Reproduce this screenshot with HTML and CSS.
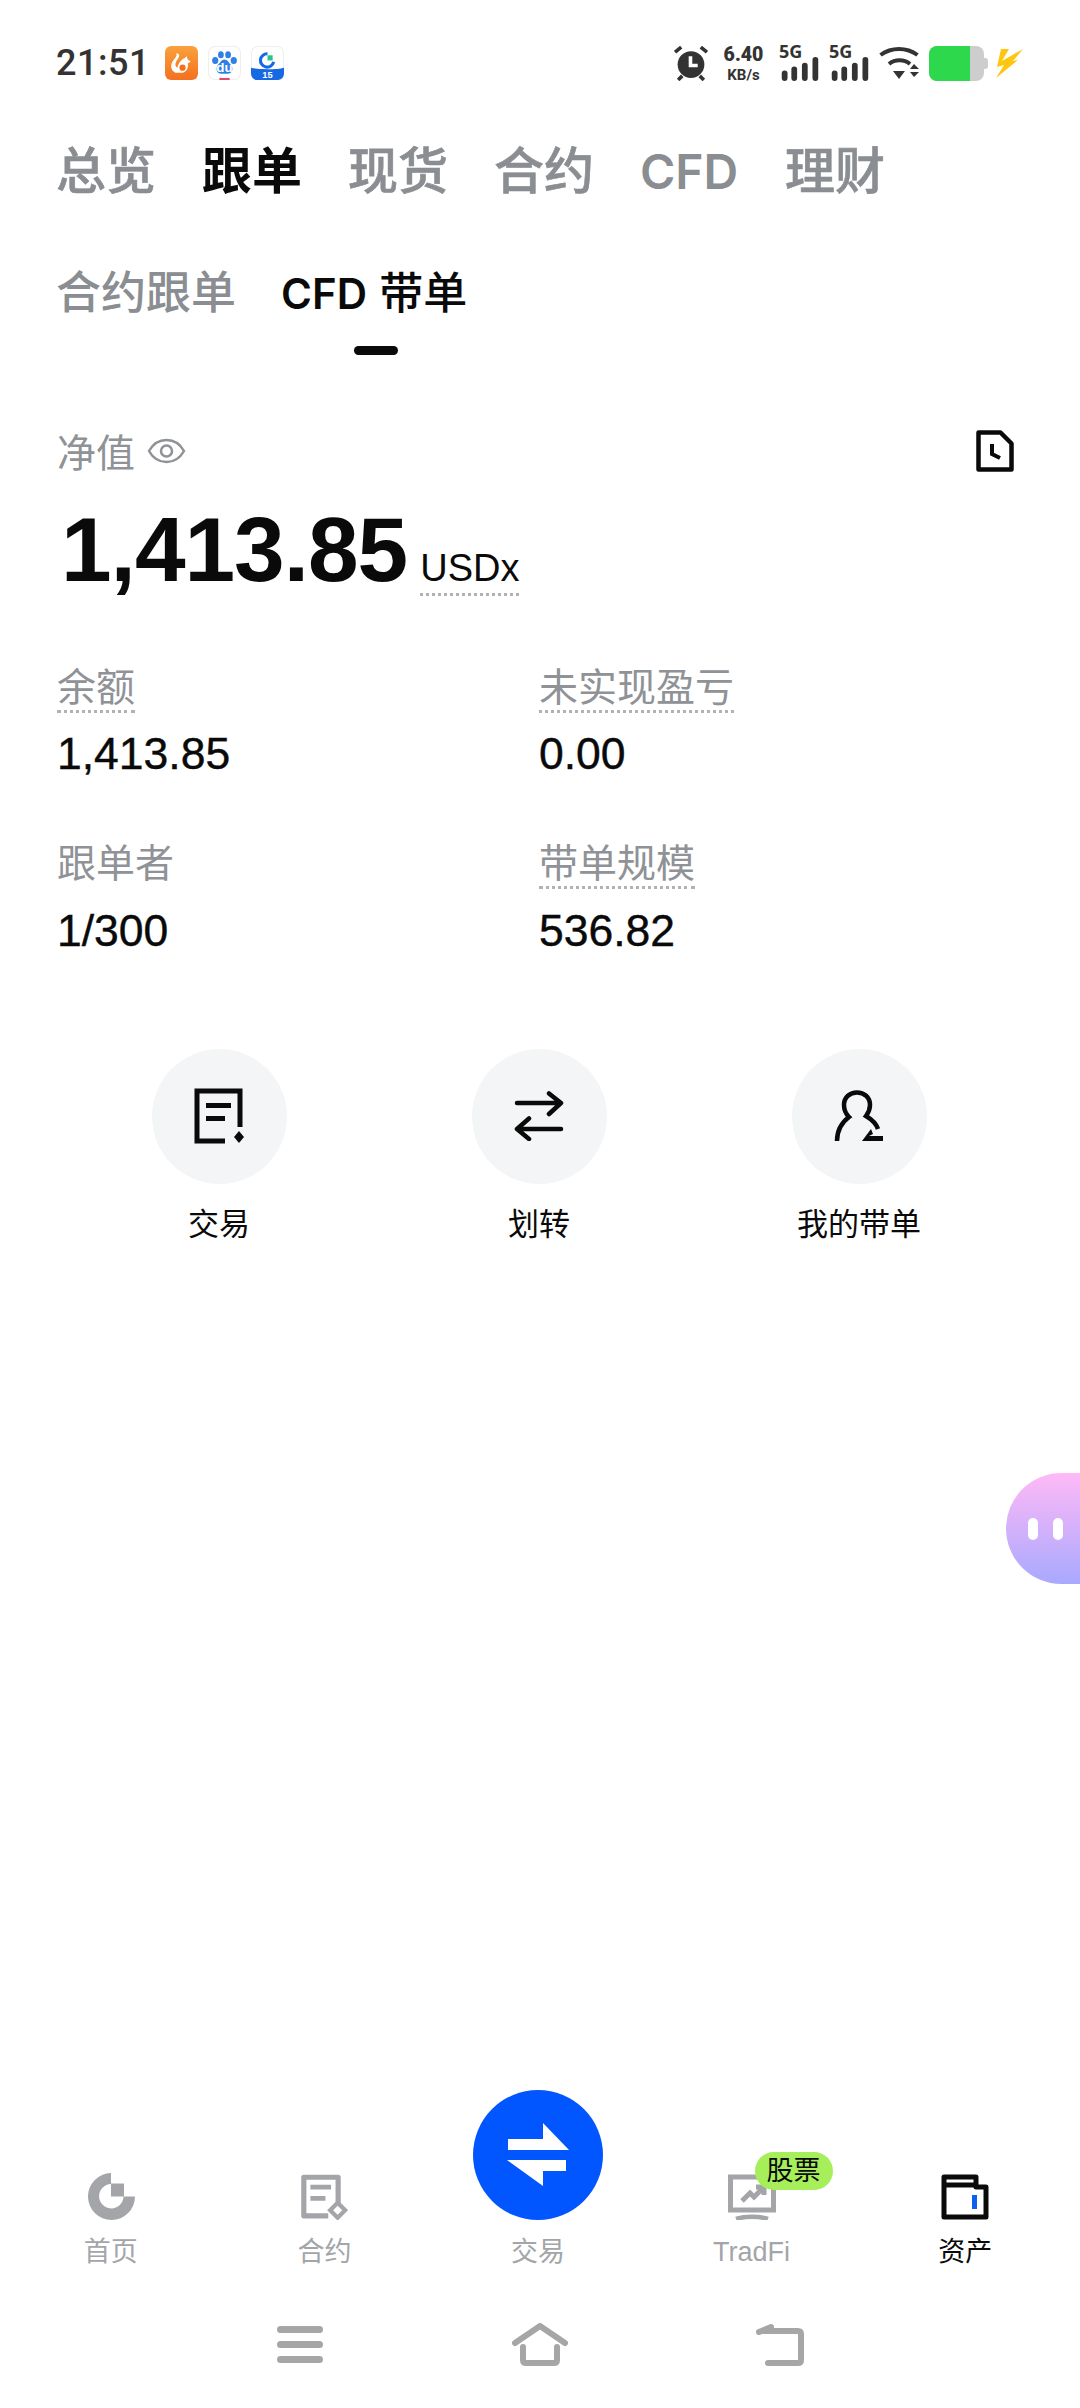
FILE: index.html
```html
<!DOCTYPE html>
<html lang="zh-CN">
	<head>
		<meta charset="utf-8" />
		<title>资产</title>
		<meta name="viewport" content="width=device-width, initial-scale=1.0">
		<link rel="stylesheet" href="styles.css">
	</head>
	<body>
		<div id="main">
			<div class="status">
				<span class="time">21:51</span>
				<div class="notif">
					<svg width="33" height="34" viewBox="0 0 32 33"><defs><linearGradient id="uc" x1="0" y1="0" x2="0" y2="1"><stop offset="0" stop-color="#f9a13c"/><stop offset="1" stop-color="#f4701f"/></linearGradient></defs><rect width="32" height="33" rx="6" fill="url(#uc)"/><path d="M11 7c4 0 3 4 1 6-2 3-3 6 0 8 1-4 4-8 7-9l2-2 1 3 3 2-3 2c1 4-1 8-5 9h-7c-5-3-5-8-2-12 2-3 4-4 3-7z" fill="#fff"/><circle cx="17" cy="21" r="3" fill="#f4701f"/></svg>
					<svg width="33" height="34" viewBox="0 0 32 33"><rect x=".5" y=".5" width="31" height="32" rx="6" fill="#fff" stroke="#eee"/><g fill="#2f7fe6"><ellipse cx="7" cy="14" rx="3" ry="3.400"/><ellipse cx="12.500" cy="8.500" rx="2.800" ry="3.400"/><ellipse cx="19.500" cy="8.500" rx="2.800" ry="3.400"/><ellipse cx="25" cy="14" rx="3" ry="3.400"/><path d="M16 13c3 0 4 3 6 5 3 3 2 9-3 9h-6c-5 0-6-6-3-9 2-2 3-5 6-5z"/></g><text x="16" y="25" class="du">du</text><rect x="11" y="31" width="10" height="2" fill="#e8456b"/></svg>
					<svg width="33" height="34" viewBox="0 0 32 33"><rect x=".5" y=".5" width="31" height="32" rx="6" fill="#fff" stroke="#eee"/><path d="M0 21c6 2 26 2 32 0v6a6 6 0 0 1-6 6H6a6 6 0 0 1-6-6z" fill="#1668e3"/><path d="M22 15.500a6.500 6.500 0 1 1-6-8" fill="none" stroke="#1668e3" stroke-width="3"/><path d="M16 9h5v5h-5z" fill="#22c58b"/><text x="16" y="31" class="uc-num">15</text></svg>
				</div>
				<div class="status-right">
					<svg width="34" height="36" viewBox="0 0 33 35"><circle cx="16.500" cy="19" r="13" fill="#333"/><path d="M16 11v9h7" fill="none" stroke="#fff" stroke-width="3.500"/><path d="M1 7l6-5M32 7l-6-5M4 34l4-4M29 34l-4-4" stroke="#333" stroke-width="3.500"/></svg>
					<div class="speed"><b>6.40</b><span>KB/s</span></div>
					<div class="signal">
						<span class="fiveg">5G</span>
						<svg width="38" height="24" viewBox="0 0 38 25"><g fill="#333"><rect x="0" y="14" width="6" height="11" rx="3"/><rect x="10" y="10" width="6" height="15" rx="3"/><rect x="21" y="6" width="6" height="19" rx="3"/><rect x="32" y="0" width="6" height="25" rx="3"/></g></svg>
					</div>
					<div class="signal">
						<span class="fiveg">5G</span>
						<svg width="38" height="24" viewBox="0 0 38 25"><g fill="#333"><rect x="0" y="14" width="6" height="11" rx="3"/><rect x="10" y="10" width="6" height="15" rx="3"/><rect x="21" y="6" width="6" height="19" rx="3"/><rect x="32" y="0" width="6" height="25" rx="3"/></g></svg>
					</div>
					<svg width="41" height="35" viewBox="0 0 41 35"><g fill="none" stroke="#333" stroke-width="4"><path d="M1.500 9c11-8 26-8 37 0"/><path d="M10 18c6-5 15-5 21 0"/></g><path d="M14 25h12l-6 8z" fill="#333"/><path d="M31 23l4-5 5 5zM31 26h9l-5 5z" fill="#333"/></svg>
					<div class="battery"><i class="battery-fill"></i></div>
					<svg class="bolt" width="27" height="29" viewBox="0 0 27 29"><path d="M5 0h8L6 12 27 0 17 12l5-1L0 29l8-13-7 2z" fill="#fdc60f"/></svg>
				</div>
			</div>

			<div class="tabs">
				<span class="tab">总览</span>
				<span class="tab active">跟单</span>
				<span class="tab">现货</span>
				<span class="tab">合约</span>
				<span class="tab latin">CFD</span>
				<span class="tab">理财</span>
			</div>

			<div class="subtabs">
				<span class="subtab">合约跟单</span>
				<span class="subtab active"><b>CFD</b> 带单</span>
			</div>

			<div class="net-head">
				<span class="net-label">净值</span>
				<svg class="eye" width="39" height="32" viewBox="0 0 38 32"><path d="M1.500 16C6 8 12 5 19 5s13 3 17.500 11C32 24 26 27 19 27S6 24 1.500 16z" fill="none" stroke="#8f9296" stroke-width="2.500"/><circle cx="19" cy="16" r="5.500" fill="none" stroke="#8f9296" stroke-width="2.500"/></svg>
				<svg class="history" width="38" height="42" viewBox="0 0 38 42"><path d="M2.500 2.500h22l11 11v26h-33z" fill="none" stroke="#0a0a0a" stroke-width="4.500" stroke-linejoin="round"/><path d="M16 14v10l8 4" fill="none" stroke="#0a0a0a" stroke-width="4"/></svg>
			</div>

			<div class="net-value">
				<span class="net-num">1,413.85</span>
				<span class="net-unit">USDx</span>
			</div>

			<div class="stats">
				<div class="stat"><div class="stat-label"><span class="dotted">余额</span></div><div class="stat-num">1,413.85</div></div>
				<div class="stat"><div class="stat-label"><span class="dotted">未实现盈亏</span></div><div class="stat-num">0.00</div></div>
				<div class="stat"><div class="stat-label"><span>跟单者</span></div><div class="stat-num">1/300</div></div>
				<div class="stat"><div class="stat-label"><span class="dotted">带单规模</span></div><div class="stat-num">536.82</div></div>
			</div>

			<div class="actions">
				<div class="action">
					<div class="action-icon">
						<svg width="50" height="56" viewBox="0 0 50 56"><path d="M46 39V3H3v50h28" fill="none" stroke="#0a0a0a" stroke-width="5"/><path d="M12 15h25v5H12zM12 28h19v5H12z" fill="#0a0a0a"/><path d="M45 43l5 6-5 6-5-6z" fill="#0a0a0a"/></svg>
					</div>
					<span>交易</span>
				</div>
				<div class="action">
					<div class="action-icon">
						<svg width="50" height="50" viewBox="0 0 50 50"><g fill="none" stroke="#0a0a0a" stroke-width="4.500" stroke-linecap="round" stroke-linejoin="round"><path d="M3 12h44M35 2.500l12 9.500-12 11"/><path d="M47 38H3M15 27.500L3 38l12 10"/></g></svg>
					</div>
					<span>划转</span>
				</div>
				<div class="action">
					<div class="action-icon">
						<svg width="50" height="52" viewBox="0 0 50 52"><path d="M3 51c0-10 4-18 12-24-4-4-5-8-5-12C10 7 16 2.500 23 2.500S36 7 36 15c0 4-1 7-4 11 5 3 10 7 12 13" fill="none" stroke="#0a0a0a" stroke-width="4.500"/><path d="M28 51l9-12 2 5-4 2h14v5z" fill="#0a0a0a"/></svg>
					</div>
					<span>我的带单</span>
				</div>
			</div>

			<div class="float-bot"><i></i><i></i></div>

			<div class="footer">
				<div class="nav">
					<div class="nav-item">
						<div class="nav-icon">
							<svg width="48" height="47" viewBox="0 0 48 47"><path d="M24 0a23.500 23.500 0 1 0 24 23.500H36.500A12.200 12.200 0 1 1 24 11z" fill="#a3a5a9"/><rect x="24" y="10.500" width="13" height="13" fill="#a3a5a9"/></svg>
						</div>
						<span>首页</span>
					</div>
					<div class="nav-item">
						<div class="nav-icon">
							<svg width="47" height="46" viewBox="0 0 50 48"><path d="M39.500 33V3H3v41h26" fill="none" stroke="#a3a5a9" stroke-width="5.500" stroke-linejoin="round"/><path d="M10 11h22v5H10zM10 23h16v5H10z" fill="#a3a5a9"/><path d="M39 30l8 8-8 8-8-8z" fill="none" stroke="#a3a5a9" stroke-width="4.500"/></svg>
						</div>
						<span>合约</span>
					</div>
					<div class="nav-item trade">
						<div class="trade-btn">
							<svg width="130" height="130" viewBox="0 0 130 130"><path d="M35 49h35V33l26 27H35zM34 70h59v11H70v15z" fill="#fff"/></svg>
						</div>
						<span>交易</span>
					</div>
					<div class="nav-item">
						<div class="nav-icon tradfi">
							<svg width="48" height="46" viewBox="0 0 48 46"><path d="M2.500 36V3h43v33z" fill="none" stroke="#a3a5a9" stroke-width="5"/><path d="M14 27l8-8 4 4 8-8M28 13h8v8" fill="none" stroke="#a3a5a9" stroke-width="5"/><path d="M8 45c9-3 23-3 32 0" fill="none" stroke="#a3a5a9" stroke-width="4.500"/></svg>
							<span class="badge">股票</span>
						</div>
						<span>TradFi</span>
					</div>
					<div class="nav-item current">
						<div class="nav-icon">
							<svg width="48" height="46" viewBox="0 0 48 46"><path d="M3 3h32v10h10v30H3z" fill="none" stroke="#0a0a0a" stroke-width="5" stroke-linejoin="round"/><path d="M3 11h32" stroke="#0a0a0a" stroke-width="5"/><rect x="31" y="21" width="5" height="14" fill="#0d5ef5"/></svg>
						</div>
						<span>资产</span>
					</div>
				</div>

				<div class="sysnav">
					<svg width="46" height="37" viewBox="0 0 46 37"><path d="M3.500 3.500h39M3.500 18.500h39M3.500 33.500h39" stroke="#a6a6a6" stroke-width="7" stroke-linecap="round"/></svg>
					<svg width="56" height="43" viewBox="0 0 56 43"><path d="M3 20L28 3l25 17M11 24v13c0 2 1 3 3 3h28c2 0 3-1 3-3V24" fill="none" stroke="#a6a6a6" stroke-width="6" stroke-linecap="round" stroke-linejoin="round"/></svg>
					<svg width="48" height="43" viewBox="0 0 48 43"><path d="M12 40h30c2 0 3-1 3-3V11c0-2-1-3-3-3H8" fill="none" stroke="#a6a6a6" stroke-width="6" stroke-linecap="round"/><path d="M3 9l12-5" stroke="#a6a6a6" stroke-width="6" stroke-linecap="round"/></svg>
				</div>
			</div>
		</div>
	</body>
</html>
```

FILE: styles.css
```css
html, body {
	margin:0;
	padding:0;
	background:#fff;
	font-family:"Liberation Sans", "Noto Sans CJK SC", sans-serif;
}
#main {
	position:relative;
	display:flex;
	flex-direction:column;
	width:1080px;
	height:2408px;
	overflow:hidden;
}
svg {
	display:block;
	flex:none;
}

/* status bar */
.status {
	display:flex;
	align-items:center;
	height:36px;
	padding:45px 57px 0 56px;
}
.time {
	width:109px;
	font-family:Roboto, sans-serif;
	font-size:36px;
	font-weight:500;
	letter-spacing:.5px;
	color:#333;
}
.notif {
	display:flex;
	gap:10px;
}
.du {
	font-family:"Liberation Sans", sans-serif;
	font-size:13px;
	font-weight:700;
	fill:#fff;
	text-anchor:middle;
}
.uc-num {
	font-family:"Liberation Sans", sans-serif;
	font-size:9px;
	font-weight:700;
	fill:#fff;
	text-anchor:middle;
}
.status-right {
	display:flex;
	align-items:center;
	margin-left:auto;
}
.speed {
	display:flex;
	flex-direction:column;
	align-items:center;
	width:39px;
	margin:0 16px;
	font-family:Roboto, sans-serif;
	font-weight:700;
	color:#333;
}
.speed b {
	font-size:19.500px;
	line-height:23px;
}
.speed span {
	font-size:15px;
	line-height:18px;
}
.signal {
	position:relative;
	width:40px;
	height:36px;
	margin-right:10px;
}
.signal svg {
	position:absolute;
	left:2px;
	bottom:0;
}
.fiveg {
	position:absolute;
	left:0;
	top:-4px;
	font-family:"Open Sans", sans-serif;
	font-size:18px;
	font-weight:700;
	line-height:20px;
	color:#333;
}
.battery {
	position:relative;
	width:55px;
	height:35px;
	margin:0 12px 0 9px;
	border-radius:8px;
	background:#cdcdcd;
}
.battery::after {
	content:"";
	position:absolute;
	right:-4px;
	top:12px;
	width:4px;
	height:11px;
	border-radius:0 3px 3px 0;
	background:#cdcdcd;
}
.battery-fill {
	display:block;
	width:41px;
	height:35px;
	border-radius:8px 0 0 8px;
	background:#2ed84c;
}

/* tabs */
.tabs {
	display:flex;
	gap:46px;
	margin-top:61px;
	padding-left:56px;
}
.tab {
	font-size:50px;
	font-weight:500;
	line-height:60px;
	color:#8a8d91;
	-webkit-text-stroke:.6px #8a8d91;
}
.tab.latin {
	width:99px;
	font-family:Inter, sans-serif;
	font-size:48px;
	font-weight:600;
	-webkit-text-stroke:0;
}
.tab.active {
	font-weight:700;
	color:#0a0a0a;
	-webkit-text-stroke:0;
}
.subtabs {
	display:flex;
	gap:45px;
	margin-top:63.500px;
	padding-left:56px;
}
.subtab {
	position:relative;
	font-size:45px;
	font-weight:500;
	line-height:56px;
	color:#8a8d91;
}
.subtab.active {
	font-size:44px;
	color:#0a0a0a;
}
.subtab.active b {
	font-family:Inter, sans-serif;
	font-size:42px;
	font-weight:600;
}
.subtab.active::after {
	content:"";
	display:block;
	width:44px;
	height:9px;
	margin:24.500px 0 0 calc(50% - 20.500px);
	border-radius:5px;
	background:#0a0a0a;
}

/* net value */
.net-head {
	display:flex;
	align-items:center;
	height:50px;
	margin-top:71px;
	padding:0 66px 0 57px;
}
.net-label {
	padding-bottom:3px;
	font-size:39px;
	color:#8f9296;
}
.eye {
	margin-left:12px;
}
.history {
	margin-left:auto;
}
.net-value {
	display:flex;
	align-items:baseline;
	gap:13px;
	margin-top:23.500px;
	padding-left:61px;
	line-height:100px;
}
.net-num {
	font-size:91px;
	font-weight:700;
	color:#0a0a0a;
	letter-spacing:-1px;
}
.net-unit {
	padding-bottom:3px;
	font-size:38px;
	line-height:44px;
	color:#0a0a0a;
	border-bottom:3px dotted #b0b2b5;
}

/* stats */
.stats {
	display:grid;
	grid-template-columns:482px 1fr;
	row-gap:63px;
	margin-top:65px;
	padding-left:57px;
}
.stat-label {
	height:47px;
	font-size:39px;
	line-height:45px;
	color:#8f9296;
}
.stat-label .dotted {
	display:inline-block;
	border-bottom:3px dotted #b0b2b5;
}
.stat-num {
	margin-top:18.500px;
	font-size:44.500px;
	line-height:48px;
	color:#0a0a0a;
	-webkit-text-stroke:.4px #0a0a0a;
}

/* actions */
.actions {
	display:grid;
	grid-template-columns:repeat(3, 320px);
	margin-top:94px;
	padding-left:59px;
}
.action {
	display:flex;
	flex-direction:column;
	align-items:center;
	gap:21.500px;
	font-size:31px;
	line-height:40px;
	color:#0a0a0a;
}
.action-icon {
	display:flex;
	align-items:center;
	justify-content:center;
	width:135px;
	height:135px;
	border-radius:50%;
	background:#f4f5f6;
}

/* floating helper */
.float-bot {
	position:absolute;
	right:0;
	top:1473px;
	display:flex;
	align-items:center;
	gap:15px;
	width:74px;
	height:111px;
	padding-left:22px;
	box-sizing:border-box;
	border-radius:56px 0 0 56px;
	background:linear-gradient(#ffb9f6, #a8a9ff);
}
.float-bot i {
	display:block;
	width:10px;
	height:22px;
	border-radius:5px;
	background:#fff;
}

/* bottom nav */
.footer {
	margin-top:auto;
	padding-bottom:42px;
}
.nav {
	display:flex;
	padding:0 8px 0 4px;
}
.nav-item {
	display:flex;
	flex:1;
	flex-direction:column;
	align-items:center;
	gap:15px;
	font-size:27px;
	line-height:34px;
	color:#a3a5a9;
}
.nav-item.current {
	color:#0a0a0a;
}
.nav-icon {
	position:relative;
	display:flex;
	align-items:flex-end;
	height:48px;
}
.trade {
	position:relative;
	padding-top:63px;
}
.trade-btn {
	position:absolute;
	left:50%;
	bottom:49px;
	width:130px;
	height:130px;
	margin-left:-65px;
	border-radius:50%;
	background:#0256ff;
}
.badge {
	position:absolute;
	left:27px;
	top:-20px;
	width:78px;
	height:38px;
	border-radius:19px;
	font-size:27px;
	line-height:38px;
	text-align:center;
	color:#0a0a0a;
	background:#a6ee5a;
}
.sysnav {
	display:grid;
	grid-template-columns:repeat(3, 240px);
	justify-content:center;
	justify-items:center;
	align-items:center;
	height:43px;
	margin-top:54px;
}
```
